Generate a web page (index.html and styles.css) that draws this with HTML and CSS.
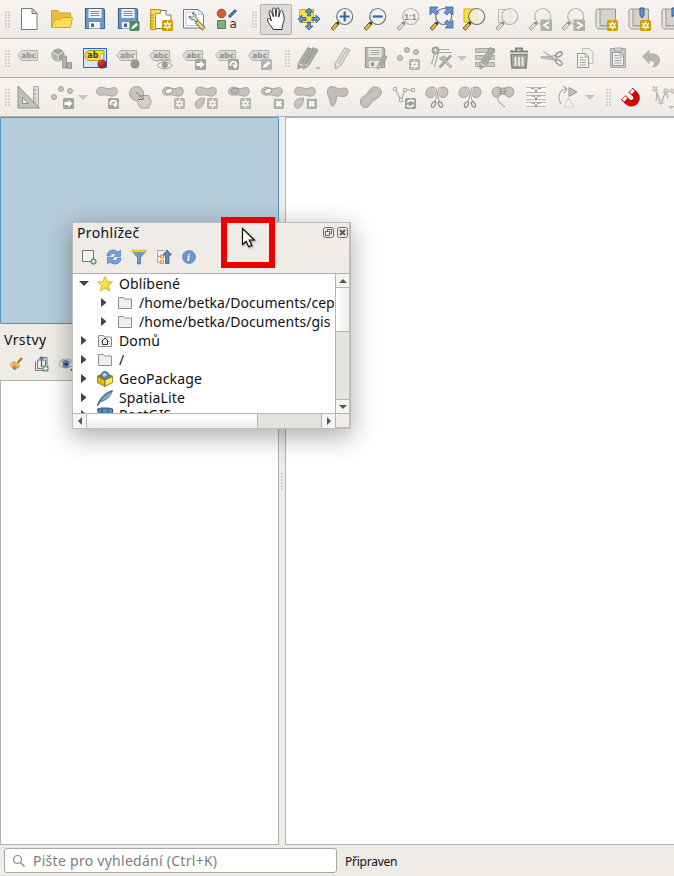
FILE: index.html
```html
<!DOCTYPE html>
<html lang="cs">
<head>
<meta charset="utf-8">
<title>QGIS</title>
<link rel="stylesheet" href="styles.css">
</head>
<body>
<svg class="defs" width="0" height="0">
  <defs>
    <linearGradient id="gy" x1="0" y1="0" x2="1" y2="1"><stop offset="0" stop-color="#fdf08a"/><stop offset="1" stop-color="#f5cf12"/></linearGradient>
    <radialGradient id="gr" cx=".35" cy=".3" r=".8"><stop offset="0" stop-color="#d84040"/><stop offset="1" stop-color="#8c1010"/></radialGradient>
    <symbol id="b-star" viewBox="0 0 11 11"><rect width="11" height="11" rx="1.5" fill="currentColor"/><path d="M5.5 1.3v8.4M1.9 3.4l7.2 4.2M9.1 3.4L1.9 7.6" stroke="#fff" stroke-width="1.3"/><circle cx="5.5" cy="5.5" r="2.5" fill="#fff"/><circle cx="5.5" cy="5.5" r="1.2" fill="currentColor"/></symbol>
    <symbol id="b-arrow" viewBox="0 0 11 11"><rect width="11" height="11" rx="1.5" fill="currentColor"/><path d="M1.500 3.900h3.800V1.800l4.200 3.700-4.200 3.700V7.100H1.500z" fill="#fff"/></symbol>
    <symbol id="b-rot" viewBox="0 0 11 11"><rect width="11" height="11" rx="1.5" fill="currentColor"/><path d="M2.700 7A3 3 0 1 1 7 8.300" fill="none" stroke="#fff" stroke-width="1.700"/><path d="M4 5.500h3.500v4.500z" fill="#fff"/></symbol>
    <symbol id="b-x" viewBox="0 0 11 11"><rect width="11" height="11" rx="1.5" fill="currentColor"/><path d="M3 3l5 5M8 3L3 8" stroke="#fff" stroke-width="2.500"/></symbol>
    <symbol id="b-pen" viewBox="0 0 11 11"><rect width="11" height="11" rx="1.5" fill="currentColor"/><path d="M2 9l1-3 4.500-4 2 2L5 8z" fill="#fff"/></symbol>
    <symbol id="tag" viewBox="0 0 24 24"><path d="M.6 9.500l4-5h16v10h-16z" fill="#dcdad7" stroke="#b4b2af"/><text x="4.300" y="12.300" class="abc">abc</text></symbol>
    <symbol id="lens" viewBox="0 0 24 24"><path d="M2 22.500L8 16" stroke="var(--edge)" stroke-width="3.600"/><path d="M2.400 22.100L7.500 16.600" stroke="var(--grip)" stroke-width="2.400"/><path d="M7 17l3-3" stroke="var(--edge)" stroke-width="2.200"/><circle cx="14.700" cy="9.500" r="8" fill="var(--glass)" stroke="var(--ring)" stroke-width="1.200"/></symbol>
    <symbol id="floppy" viewBox="0 0 24 24"><path d="M2.500 1.500h17.500l1.500 1.500v18.500H2.500z" fill="var(--a)" stroke="var(--b)" stroke-width="1.200"/><path d="M5.500 2h13v9h-13z" fill="var(--l)"/><path d="M7.500 4.500h9M7.500 6.500h9M7.500 8.500h9" stroke="var(--n)" stroke-width=".9"/><path d="M6 15h11v6.500H6z" fill="var(--l)"/><path d="M8 16.500h3v3.500H8z" fill="var(--b)"/></symbol>
    <symbol id="blob" viewBox="0 0 24 24"><path d="M1.500 6.500C1.500 3 5 1.500 8.500 2.500s4 2 7.500.7 6-.7 6.200 2.500c.2 4-2.700 6-6.200 5.300S10 9.500 7.500 10 1.500 10 1.500 6.500z" fill="#c6c4c1" stroke="#a5a3a0"/></symbol>
    <symbol id="drop" viewBox="0 0 24 24"><path d="M1.500 20c-1-4 3-7 9-7 0 6-3 11-7 10-1.300-.3-1.700-1.500-2-3z" fill="#c6c4c1" stroke="#a5a3a0"/></symbol>
    <symbol id="pencil" viewBox="0 0 24 24"><path d="M5 17.500L15 1.500l5 2.500L10.500 20l-5.500 3z" fill="var(--p)" stroke="var(--po)"/><path d="M17.500 3L8 18.500" fill="none" stroke="var(--po)" stroke-width=".8"/><path d="M5.500 17.500l5 2.500" stroke="#efedeb" stroke-width=".9"/></symbol>
    <symbol id="scis" viewBox="0 0 24 24"><path d="M1 8c0-3 2-6 6-6 3 0 4 2 4 5s-3 6-6 5.500S1 10.500 1 8zM13 7c0-3 1-5 5-5 3 0 5 2 5 5s-2 5.500-5 5.500-5-2.500-5-5.500z" fill="#c6c4c1" stroke="#a5a3a0"/><path d="M10.500 2.500L14.500 17M14 2.500L10 17" stroke="#f0eeeb" stroke-width="2.200"/><path d="M10.500 2.500L14.500 17M14 2.500L10 17" stroke="#a6a4a1" stroke-width="1"/><ellipse cx="8.500" cy="19.500" rx="1.700" ry="3" transform="rotate(30 8.500 19.500)" class="loop"/><ellipse cx="15.500" cy="19.500" rx="1.700" ry="3" transform="rotate(-30 15.500 19.500)" class="loop"/></symbol>
    <symbol id="scroll" viewBox="0 0 24 24"><path d="M5 2h16.500v17H5z" fill="#d4d2cf" stroke="#969492"/><path d="M2 3.500c0-2 4-2 4 0v15c0 4-4 4-4 0z" fill="#e7e5e3" stroke="#969492"/><path d="M4 22h14v-3H6" fill="#e0dedc" stroke="#969492"/></symbol>
    <symbol id="folder" viewBox="0 0 16 16"><path d="M1.500 13.500v-11h5l1 1.500h7v9.500z" fill="#efefef" stroke="#8d8d8d"/></symbol>
  </defs>
</svg>
<div class="app">
  <header>
    <div class="bar">
      <i class="grip first"></i>
      <svg class="ic"><path d="M4.500 1.500H15l5 5v16H4.500z" fill="#fff" stroke="#777"/><path d="M15 1.500v5h5z" fill="#ddd" stroke="#777"/></svg>
      <svg class="ic"><path d="M1.500 20.500V3.500h6l2 2.500h11v4" fill="#e9bc3a" stroke="#cb9f2d"/><path d="M1.500 20.500l3.500-8h5l2-2h10.500l-2 10z" fill="#ffdc57" stroke="#d3a62e"/></svg>
      <svg class="ic blue"><use href="#floppy"/></svg>
      <svg class="ic blue"><use href="#floppy"/><g color="#4d8a57"><use href="#b-pen" x="13" y="14" width="11" height="10"/></g></svg>
      <svg class="ic"><path d="M5 3.500h12l5 5v13H5z" fill="#fff" stroke="#777"/><path d="M17 3v5h5" fill="#fff" stroke="#777"/><path d="M1.500 2.500h10v4h-5v16h-5z" fill="#f7dc50" stroke="#bd9412"/><path d="M2 8h2.500M2 11h2.500M2 14h2.500M2 17h2.500M2 20h2.500" stroke="#9d7d18"/><g color="#caa108"><use href="#b-star" x="13" y="13" width="11" height="11"/></g></svg>
      <svg class="ic"><path d="M1.500 2.500h15l5 5v13.500h-20z" fill="#fff" stroke="#777"/><path d="M16.500 2.500v5h5M4 5h9M4 5v13.500h14" fill="none" stroke="#b5c8e0"/><path d="M7 9c0 3 2.500 4.500 5 3.500l2 2.500 2-2-2-2.500C15 8 13 5.500 10 6l2 2.500-2 2z" fill="#ddd" stroke="#666"/><path d="M14.500 14.500l7.500 7.500" stroke="#776728" stroke-width="4.500"/><path d="M15 15l6.500 6.500" stroke="#efd778" stroke-width="2.600"/></svg>
      <svg class="ic"><circle cx="6.500" cy="6.500" r="4.200" fill="#cf6133" stroke="#aa451e"/><path d="M2.500 13.500h8v8h-8z" fill="#83ad84" stroke="#4c8753"/><path d="M14 10l7-7" stroke="#31598d" stroke-width="3"/><path d="M15 9l6-6" stroke="#6c98c9"/><text x="14.500" y="21" class="letter">a</text></svg>
      <i class="grip"></i>
      <span class="pressed"><svg class="ic"><path d="M9 22.500c-1-3-5.500-7-5.500-9.500s2.500-2 4 1L5 5.500C4.500 3.500 7 3 7.500 5L9.500 10 8.500 2.500c0-2 2.500-2 2.800 0L12 9.500l.5-7.300c.2-1.900 2.600-1.600 2.600.2l-.3 7.600 1.500-5.500c.6-1.800 2.700-1.200 2.400.6 2 5.400 1.800 8.400.3 11.400l-1 6z" fill="#fff" stroke="#333"/></svg></span>
      <svg class="ic"><path d="M2.500 2.500h14v13h-14z" fill="#f7df43" stroke="#cfaa1c"/><path d="M12 1l4 4h-2.500v4h-3V5H8zM12 23l-4-4h2.500v-4h3v4H16zM1 12l4-4v2.500h4v3H5V16zM23 12l-4 4v-2.500h-4v-3h4V8z" fill="#6494c8" stroke="#315d91" stroke-width=".8"/></svg>
      <svg class="ic yg"><use href="#lens"/><path d="M14.700 4.500v10M9.700 9.500h10" stroke="#386ba6" stroke-width="2.200"/></svg>
      <svg class="ic yg"><use href="#lens"/><path d="M9.700 9.500h10" stroke="#386ba6" stroke-width="2.200"/></svg>
      <svg class="ic gg"><use href="#lens"/><text x="8.300" y="12.500" class="one">1:1</text></svg>
      <svg class="ic yg"><use href="#lens"/><path d="M1 0h8L7 2.500l3 3L7 8 4 5 1 8zM24 0v8l-3-3-3 3-3-2.500 3-3L16 0zM24 21h-8l2.500-2.500-3-3 2.500-2.500 3 3 3-3z" fill="#6595c9" stroke="#315d91" stroke-width=".7"/></svg>
      <svg class="ic yg"><path d="M2 2h13v13H2z" fill="#f8e140" stroke="#d0b000"/><use href="#lens"/></svg>
      <svg class="ic gg"><path d="M3.500 2.500h12v13h-12z" fill="#eee" stroke="#bbb"/><use href="#lens"/></svg>
      <svg class="ic gg"><use href="#lens"/><rect x="12.500" y="12.500" width="11.500" height="11.500" fill="#b1afac"/><path d="M21 15l-5 3.200 5 3.200" fill="none" stroke="#fff" stroke-width="1.800"/></svg>
      <svg class="ic gg"><use href="#lens"/><rect x="12.500" y="12.500" width="11.500" height="11.500" fill="#b1afac"/><path d="M16 15l5 3.200-5 3.200" fill="none" stroke="#fff" stroke-width="1.800"/></svg>
      <svg class="ic"><use href="#scroll"/><g color="#caa108"><use href="#b-star" x="13" y="13" width="11" height="11"/></g></svg>
      <svg class="ic"><use href="#scroll"/><path d="M13 1h4v7l-2 3-2-3z" fill="#6595c9" stroke="#315d91"/><g color="#caa108"><use href="#b-star" x="13" y="13" width="11" height="11"/></g></svg>
      <svg class="ic"><use href="#scroll"/><path d="M12 1h4v9l-2-2-2 2z" fill="#6595c9" stroke="#315d91"/></svg>
    </div>
    <div class="bar g">
      <i class="grip first"></i>
      <svg class="ic"><use href="#tag"/></svg>
      <svg class="ic"><path d="M12.500 10h4v12h-4zM17.500 16.500h4v6h-4z" fill="#b3b1ae" stroke="#9a9895"/><circle cx="8" cy="9" r="6.500" fill="#a5a3a0"/><path d="M8 9V15.500A6.500 6.500 0 0 1 2.400 5.600z" fill="#b8b6b3"/><path d="M8 9L2.500 5.700M8 9l5.500-3.300M8 9v6.500" stroke="#e4e2df"/></svg>
      <svg class="ic"><path d="M.5 2.500h23v19H.5z" fill="#d8e5f3" stroke="#156fd6"/><path d="M1 9.500l4-5h16v10H5z" fill="#f2df43" stroke="#b89c16"/><text x="4.300" y="12.300" class="ab">ab</text><path d="M17 15l1-7.500 2.500 1-1 7z" fill="#fff" stroke="#998a60" stroke-width=".6"/><circle cx="19" cy="18" r="4.600" fill="url(#gr)"/></svg>
      <svg class="ic"><use href="#tag"/><path d="M17 15l1-7.500 2.500 1-1 7z" fill="#eee" stroke="#aaa" stroke-width=".6"/><circle cx="19" cy="18" r="4.600" fill="#989693"/></svg>
      <svg class="ic"><use href="#tag"/><path d="M8 19.500c4-5 11-5 15.500 0-4.500 4.500-11.500 4.500-15.500 0z" fill="#eee" stroke="#999"/><circle cx="15.800" cy="19" r="3" fill="#999"/><path d="M8 16c4-4 11-4 15 0" fill="none" stroke="#aaa"/></svg>
      <svg class="ic"><use href="#tag"/><use href="#b-arrow" x="13" y="13" width="11" height="11"/></svg>
      <svg class="ic"><use href="#tag"/><use href="#b-rot" x="13" y="13" width="11" height="11"/></svg>
      <svg class="ic"><use href="#tag"/><g color="#b5b3b0"><use href="#b-pen" x="13" y="13" width="11" height="11"/></g></svg>
      <i class="grip"></i>
      <svg class="ic dp"><use href="#pencil" x="1" width="24" height="24"/><use href="#pencil" x="-4" width="24" height="24"/><path d="M18 21h6l-3 3z" fill="#bbb"/></svg>
      <svg class="ic"><use href="#pencil" width="24" height="24"/></svg>
      <svg class="ic"><use href="#floppy"/><g class="dp"><use href="#pencil" x="11" y="8" width="16" height="16"/></g></svg>
      <svg class="ic"><g class="node"><circle cx="4" cy="12" r="2.500"/><circle cx="11" cy="4" r="2.500"/><circle cx="20" cy="6" r="2.500"/></g><g color="#b8b6b3"><use href="#b-star" x="13" y="13" width="11" height="11"/></g></svg>
      <svg class="ic"><path d="M2.500 18.500L6 6M5.500 20.500L9 7.500M8 3.500h12M9 6.500h14" class="ol"/><circle cx="6.500" cy="4.500" r="3.500" fill="#b5b3b0" stroke="#8f8d8a"/><path d="M4.500 4.500h4M6.500 2.500v4" stroke="#e0dedb"/><path d="M22 9.500L10.500 21.500" stroke="#a9a7a4" stroke-width="3"/><path d="M14 13.500l8.500 8" stroke="#aaa8a5" stroke-width="2.600"/><path d="M14 13.500l8 7.500" stroke="#dedcd9"/><path d="M10 12.500l5-3 2.500 3-3.500 2.500z" fill="#bbb9b6" stroke="#a5a3a0" stroke-width=".7"/></svg>
      <i class="arr"></i>
      <svg class="ic"><path d="M1.500 2.500h19v4h-19zM1.500 9.500h19v4h-19zM1.500 16.500h19v4h-19z" fill="#c9c7c4" stroke="#acaaa7"/><g class="dp"><use href="#pencil" x="1" width="24" height="24"/></g></svg>
      <svg class="ic"><path d="M4 8.500h16l-1 13.500H5z" fill="#aaa8a5" stroke="#858380" stroke-width="1.500"/><path d="M3 5.500h18M9 5V2.500h6V5" fill="none" stroke="#858380" stroke-width="2"/><path d="M8.500 11v9M12 11v9M15.500 11v9" stroke="#eee" stroke-width="1.800"/></svg>
      <svg class="ic"><path d="M1 10.500l16 2.500-1 1.500L1 12zM3 5l13.500 9-2 1z" fill="#d6d4d1" stroke="#aba9a6" stroke-width=".8"/><path d="M1.500 11.500L17 9.500" stroke="#b5b3b0" stroke-width="1.500"/><ellipse cx="18.800" cy="8.500" rx="3.700" ry="2" transform="rotate(-30 18.800 8.500)" fill="none" stroke="#999" stroke-width="1.500"/><ellipse cx="19" cy="16.500" rx="3.700" ry="2" transform="rotate(40 19 16.500)" fill="none" stroke="#999" stroke-width="1.500"/></svg>
      <svg class="ic"><path d="M9.500 2.500h7l3.500 3.500v11.500H9.500z" fill="#f0eeec" stroke="#bfbdba"/><path d="M4.500 7.500h8l3 3v11h-11z" fill="#f3f1ef" stroke="#999"/><path d="M7 11.500h3M7 14h6M7 16.500h6M7 19h6M12 7.500v3.500h3.500" fill="none" stroke="#a5a3a0"/></svg>
      <svg class="ic"><path d="M4.500 2.500h15v19h-15z" fill="#c9c7c4" stroke="#aaa8a5"/><path d="M6.500 6.500h8l3 3v10h-11z" fill="#f3f1ef" stroke="#999"/><path d="M8.500 2h7v3h-7z" fill="#ddd" stroke="#a5a3a0"/><path d="M8.500 9.500h4M8.500 12h7M8.500 14.500h7M8.500 17h7M14 6.500v3.500h3.500" fill="none" stroke="#a5a3a0"/></svg>
      <svg class="ic"><path d="M3.500 10.500L10 4.500v3.500c8-1 11 3 10.500 7-.5 4-3.500 5.500-7 6 3-3 3.500-7-3.500-6.500v3z" fill="#b8b6b3" stroke="#acaaa7" stroke-width=".8"/></svg>
    </div>
    <div class="bar g">
      <i class="grip first"></i>
      <svg class="ic"><path d="M16.500 1.500h5v21h-5z" fill="#dddbd8" stroke="#aaa"/><path d="M17 5h2M17 9h2M17 13h2M17 17h2" stroke="#999"/><path d="M1 1l21.500 22H1z" fill="#c2c0bd" stroke="#918f8c"/><path d="M5.500 12l6 6.500h-6z" fill="#f1efed" stroke="#918f8c"/></svg>
      <svg class="ic"><g class="node"><circle cx="4" cy="12" r="2.500"/><circle cx="11" cy="4" r="2.500"/><circle cx="20" cy="6" r="2.500"/></g><use href="#b-arrow" x="13" y="13" width="11" height="11"/></svg>
      <i class="arr"></i>
      <svg class="ic"><use href="#blob"/><use href="#b-rot" x="13" y="13" width="11" height="11"/></svg>
      <svg class="ic"><circle cx="8.500" cy="8.500" r="7" fill="#c6c4c1" stroke="#a5a3a0"/><path d="M12.500 10.500h8l3 6-3 6.500h-8l-3.500-6.500z" fill="#d0cecb" stroke="#a5a3a0"/><path d="M8 7l7 7M15 10v4.500h-4.500" fill="none" stroke="#777"/></svg>
      <svg class="ic"><use href="#blob"/><ellipse cx="8" cy="6" rx="4" ry="2.500" transform="rotate(-20 8 6)" fill="#f4f2f0" stroke="#999"/><g color="#b8b6b3"><use href="#b-star" x="13" y="13" width="11" height="11"/></g></svg>
      <svg class="ic"><use href="#blob"/><use href="#drop"/><g color="#b8b6b3"><use href="#b-star" x="13" y="13" width="11" height="11"/></g></svg>
      <svg class="ic"><use href="#blob"/><ellipse cx="8" cy="6" rx="4" ry="2.700" fill="#b8b6b3" stroke="#999"/><g color="#b8b6b3"><use href="#b-star" x="13" y="13" width="11" height="11"/></g></svg>
      <svg class="ic"><use href="#blob"/><ellipse cx="8" cy="6" rx="4" ry="2.500" transform="rotate(-20 8 6)" fill="#f4f2f0" stroke="#999"/><g color="#b1afac"><use href="#b-x" x="13.500" y="13.500" width="10.500" height="10.500"/></g></svg>
      <svg class="ic"><use href="#blob"/><use href="#drop"/><g color="#b1afac"><use href="#b-x" x="13.500" y="13.500" width="10.500" height="10.500"/></g></svg>
      <svg class="ic"><path d="M1.500 7C1 3 4 1 8 2s4 2.500 7.500 1.500S22 3 22 6.500s-2 5.500-5.500 5-5.500-1-6 1.500S9 21 6.500 21 4.500 16 3 12.500 1.500 9 1.500 7z" fill="#bfbdba" stroke="#a5a3a0"/></svg>
      <svg class="ic"><path d="M1.500 16c0-4 3.500-4.500 5.500-6S11 2 16 2s8 4 5.500 8-6 4-8 6.500-3.500 6-7 6-5-2.500-5-6.500z" fill="#c6c4c1" stroke="#a5a3a0"/><path d="M3.500 16.500c0-3 3-3.500 5-5.500s3-6.500 7-6.500 6 2.500 4 5.500-5 3-7 5.500-3 5-6 5-3-2-3-4z" fill="none" stroke="#b8b6b3"/></svg>
      <svg class="ic"><path d="M3 4l6 11 4-10h8" class="ol"/><path d="M1.500 2.500h3v3h-3zM7.500 13.500h3v3h-3zM11.500 3.500h3v3h-3zM19.500 3.500h3v3h-3z" fill="#eee" stroke="#aaa"/><rect x="13" y="13" width="11" height="11" rx="1.500" fill="#a3a19e"/><path d="M15.500 17.500a3.200 3 0 0 1 6-.5v-2M21.500 19.500a3.200 3 0 0 1-6 .5v2" fill="none" stroke="#fff" stroke-width="1.500"/></svg>
      <svg class="ic"><use href="#scis"/></svg>
      <svg class="ic"><use href="#scis"/></svg>
      <svg class="ic"><path d="M1 7c0-3 3-5 6-5 2 0 3 2 4 5-1 4-4 5-6 5S1 10 1 7zM13 6c0-3 2-4 5-4s5 2 5 5-3 5-5 5-5-3-5-6z" fill="#c6c4c1" stroke="#a5a3a0"/><path d="M8 4h8M8 6.500h8M8 9h8M10 2v8M13 2v8" stroke="#999"/><path d="M7 10c-2 6 2 8 7 12" class="ol"/></svg>
      <svg class="ic"><path d="M2 2.500h20v5H2zM2 10h20v5H2zM2 17h20v4.500H2z" fill="#faf9f7"/><path d="M2 2.500h20M2 7.500h20M2 10.500h20M2 14.500h20M2 17.500h20M2 21.500h20" stroke="#b9b7b4"/><path d="M7 3.500h3l1.500 2v2M17 3.500h-3l-1.500 2v2M7 11h3l1.500 2v2M17 11h-3l-1.500 2v2M7 18h3l1.500 2v2M17 18h-3l-1.500 2v2" fill="none" stroke="#96948f"/></svg>
      <svg class="ic"><path d="M4 19C0 12 2 5 9 4M6 1l4 3-3 4" class="ol"/><path d="M12 2.500v9l8-4.500z" fill="#c0bebb" stroke="#999"/><path d="M11.500 13l-5 9h10z" fill="#f2f0ee" stroke="#ccc"/></svg>
      <i class="arr"></i>
      <i class="grip"></i>
      <svg class="ic"><path d="M13 5.500l4 3.700c5 5-2.500 12.300-7.500 7.500l-4-4" fill="none" stroke="#a80404" stroke-width="6.400"/><path d="M13 5.500l4 3.700c5 5-2.500 12.300-7.500 7.500l-4-4" fill="none" stroke="#d90808" stroke-width="4.800"/><path d="M13 5.500l2.300 2.100M5.500 12.700l2.300 2.300" stroke="#fff" stroke-width="4.600"/><path d="M10.700 7.600l4.300-4.600M3 15.100l4.600-4.600" stroke="#c00" stroke-dasharray="1.500 1"/></svg>
      <svg class="ic"><path d="M4 4l6 14 5-12h8M6 9l-1 7M15 7l2 6" class="ol"/><path d="M2 2h4v4H2zM8 15h4v4H8zM13 4h4v4h-4zM20 4h4v4h-4z" fill="#d4d2cf" stroke="#b8b6b3" stroke-dasharray="2 1"/><path d="M17 21h7l-3.500 3z" fill="#bbb"/></svg>
    </div>
  </header>
  <main>
    <section class="left">
      <div class="dock"></div>
      <div class="layers">
        <h2>Vrstvy</h2>
        <div class="ltools">
          <svg width="17" height="17"><path d="M9.500 7L14 2" stroke="#b77720" stroke-width="2.500"/><path d="M6 5l6 5-2 2-6-5z" fill="#e5c24d" stroke="#a77a25" stroke-width=".5"/><path d="M4 7l6 5-3 2-5-4z" fill="#ee7a68"/><path d="M1 8l3-2 2 3-3 2z" fill="#f6cf38"/><path d="M4 12l2-1 2 3-2 0z" fill="#5792ce"/></svg>
          <svg width="17" height="17"><path d="M2.500 5.500v9h7M4.500 4v8.500h8V4zM7 3V1.500h7V9" fill="none" stroke="#777"/><path d="M8.500 1v10M6.500 3l2-2 2 2" fill="none" stroke="#3f75ac" stroke-width="1.300"/><rect x="9.500" y="9.500" width="6" height="6" rx="1" fill="#579b60"/><path d="M12.500 10.500v4M10.500 12.500h4" stroke="#fff" stroke-width="1.300"/></svg>
          <svg width="17" height="17"><path d="M1 8.500C4 3 11 3 15 8.500 11 13 4 13 1 8.500z" fill="#f4f4f4" stroke="#999"/><circle cx="8" cy="8" r="3.700" fill="#5b89b8"/><circle cx="8" cy="8" r="1.600" fill="#203b58"/><path d="M1 6c3-4 11-4 14 0" fill="none" stroke="#aaa"/><path d="M12 13h4l-2 2z" fill="#333"/></svg>
        </div>
        <div class="list"></div>
      </div>
    </section>
    <div class="split"><i></i></div>
    <section class="map"></section>
  </main>
  <footer>
    <div class="search"><svg width="14" height="14"><circle cx="5.500" cy="5.500" r="4" fill="none" stroke="#8a8a8a" stroke-width="1.200"/><path d="M8.500 8.500l4 4" stroke="#8a8a8a" stroke-width="1.400"/></svg><span>Pište pro vyhledání (Ctrl+K)</span></div>
    <span class="ready">Připraven</span>
  </footer>
</div>

<div class="browser">
  <div class="head"><h2>Prohlížeč</h2>
    <svg width="26" height="12"><g fill="none" stroke="#6b6966"><rect x=".5" y=".5" width="10" height="10" rx="2"/><rect x="4.500" y="2.500" width="4" height="4"/><rect x="2.500" y="4.500" width="4" height="4" fill="#efebe7"/><rect x="14.500" y=".5" width="10" height="10" rx="2"/></g><path d="M17 3l5 5M22 3l-5 5" stroke="#5c5a58" stroke-width="2"/></svg>
  </div>
  <div class="btools">
    <svg width="16" height="16"><path d="M1.500 1.500h11v11h-11z" fill="#f3f1ef" stroke="#777"/><circle cx="12.500" cy="12.500" r="2.700" fill="#8fbc95" stroke="#4a8b54"/><path d="M12.500 11v3M11 12.500h3" stroke="#fff"/></svg>
    <svg width="16" height="16"><path d="M1 7C1 1 8-1 12 3l2.500-2v6.500H8L10 5.500C7 3.500 5 4.500 4.500 7z" fill="#6fa0d5" stroke="#4478ae" stroke-width=".6"/><path d="M15 9c0 6-7 8-11 4l-2.500 2V8.500H8L6 10.500C9 12.500 11 11.500 11.500 9z" fill="#6fa0d5" stroke="#4478ae" stroke-width=".6"/></svg>
    <svg width="16" height="16"><path d="M1 2h14L9.500 8.500V15H6.500V8.500z" fill="#6c98c9" stroke="#4472a3" stroke-width=".7"/><path d="M1 1h14v2H1z" fill="#f2dc49" stroke="#c1a624" stroke-width=".6"/></svg>
    <svg width="16" height="16"><path d="M8 1.500H1.500v12H5M1.500 7.500H5" fill="none" stroke="#aaa"/><path d="M4.500 6h3v3h-3zM4.500 11.500h3v3h-3z" fill="#ffd9ad" stroke="#ef9030"/><path d="M9.500 14.500V6H7l4-5 4.500 5H13v8.500z" fill="#5c8bc0" stroke="#315d91" stroke-width=".8"/></svg>
    <svg width="16" height="16"><circle cx="8" cy="8" r="6.500" fill="#6797cc" stroke="#7392b5"/><text x="5.800" y="12.200" class="info">i</text></svg>
  </div>
  <div class="pane">
    <div class="tree">
      <div class="row"><i class="tw open"></i><svg width="16" height="16"><path d="M8 .5l2.100 5.200 5.400.3-4.200 3.500 1.400 5.500L8 12 3.300 15l1.400-5.500L.5 6l5.400-.3z" fill="url(#gy)" stroke="#d5ad20" stroke-width=".9"/></svg><span>Oblíbené</span></div>
      <div class="row sub"><i class="tw"></i><svg width="16" height="16"><use href="#folder"/></svg><span>/home/betka/Documents/cepice</span></div>
      <div class="row sub"><i class="tw"></i><svg width="16" height="16"><use href="#folder"/></svg><span>/home/betka/Documents/gis</span></div>
      <div class="row"><i class="tw"></i><svg width="16" height="16"><use href="#folder"/><path d="M4.500 8.500L8 5l3.500 3.500M5.500 8v3.500h5V8" fill="none" stroke="#333"/></svg><span>Domů</span></div>
      <div class="row"><i class="tw"></i><svg width="16" height="16"><use href="#folder"/></svg><span>/</span></div>
      <div class="row"><i class="tw"></i><svg width="16" height="16"><path d="M.5 5L8 2l7.500 3L8 9z" fill="#c69f17" stroke="#765f0c" stroke-width=".7"/><circle cx="8" cy="4.700" r="4.200" fill="#5c88b4" stroke="#31567e" stroke-width=".7"/><path d="M5 3l3-1 2 2-3 2z" fill="#c6d8e6"/><path d="M.5 5.500L8 9v6.500l-7.500-4z" fill="#e2b813" stroke="#765f0c" stroke-width=".7"/><path d="M15.500 5.500L8 9v6.500l7.500-4z" fill="#fbe957" stroke="#765f0c" stroke-width=".7"/></svg><span>GeoPackage</span></div>
      <div class="row"><i class="tw"></i><svg width="16" height="16"><path d="M.5 15.500C2 10 6 3 15.500.5 13.500 6.500 9 10.500 3.500 11.500z" fill="#8bb2d5" stroke="#315472" stroke-width=".8"/><path d="M.5 15.500C4 9 9 4 15 1" fill="none" stroke="#315472" stroke-width=".8"/></svg><span>SpatiaLite</span></div>
      <div class="row last"><i class="tw"></i><svg width="16" height="16"><path d="M.5 2l4-1h7l4 1v6l-4 2v5H7v-5L2 9z" fill="#5e8cba" stroke="#31567e"/><path d="M5 2v6M11 2v6" stroke="#31567e"/></svg><span>PostGIS</span></div>
    </div>
    <div class="vs"><b class="btn up"></b><b class="thumb"></b><b class="track"></b><b class="btn down"></b></div>
    <div class="hs"><b class="btn lt"></b><b class="thumb"></b><b class="track"></b><b class="btn rt"></b></div>
    <div class="corner"></div>
  </div>
</div>
<div class="mark"></div>
<svg class="cursor" width="16" height="24"><path d="M1.500 1.500v16l3.700-3.300 2.500 5.500 3-1.300-2.500-5.400h5z" fill="#fff" stroke="#111" stroke-width="1.200"/></svg>
</body>
</html>
```
FILE: styles.css
```css
*, ::before { box-sizing: border-box; }
body { margin: 0; width: 674px; height: 876px; overflow: hidden; background: #efebe7; color: #111; font: 14px/19px "Noto Sans", "Open Sans", sans-serif; }
.defs { position: absolute; }
h2 { margin: 0; font-size: 14px; line-height: 19px; font-weight: 400; letter-spacing: .4px; }
.app { height: 876px; display: flex; flex-direction: column; }
header { flex: none; height: 117px; }
.bar { height: 39px; display: flex; align-items: flex-start; overflow: hidden; border-bottom: 1px solid #b3b0ad; background: linear-gradient(#f7f4f1, #eeebe7); --a: #bbb9b6; --b: #999794; --l: #e9e7e4; --n: #a5a3a0; --p: #dcdad7; --po: #aeaca9; --edge: #333; --grip: #f5bd27; --glass: #edf1f2cc; --ring: #707475; }
.bar.g { color: #a6a4a1; }
.ic { flex: none; display: block; width: 24px; height: 24px; margin: 7px 5px 0 4px; overflow: visible; fill: none; }
.g .ic { margin-top: 6.500px; }
.blue { --a: #6d98c9; --b: #44658c; --l: #f1f3f5; --n: #77808a; }
.gg { --edge: #858380; --grip: #e4e2df; --glass: #f0eeecb0; --ring: #b5b3b0; }
.dp { --p: #b1afac; --po: #979592; }
.grip { flex: none; width: 16px; height: 39px; padding: 11px 0 0 8px; }
.grip::before { content: ""; display: block; width: 6px; height: 17px; background: radial-gradient(circle at 1px 1px, #cbc8c4 .6px, transparent 1px) 0 0 / 3px 3px; }
.grip.first { width: 13px; padding-left: 5px; }
.arr { flex: none; width: 12px; padding-top: 17px; }
.arr::before { content: ""; display: block; width: 10px; height: 5px; margin-left: -1px; border: 5px solid transparent; border-top-color: #c6c4c1; border-bottom: 0; }
.pressed { flex: none; width: 32px; height: 31px; margin: 4px 1px 0 0; background: #dedad7; border: 1px solid #b1aeab; border-radius: 2px; }
.pressed .ic { margin: 2px 3px; }
.abc { font: bold 7.5px "DejaVu Sans", sans-serif; fill: #92908d; }
.ab { font: bold 8px "DejaVu Sans", sans-serif; fill: #3d3a20; }
.letter { font: 12px "DejaVu Sans", sans-serif; fill: #333; }
.one { font: bold 8.5px "Liberation Sans", sans-serif; fill: #8f8d8a; }
.info { font: italic bold 11px "Liberation Serif", serif; fill: #fff; }
.ol { fill: none; stroke: #a8a6a3; stroke-width: 1.1; }
.loop { fill: none; stroke: #96948f; stroke-width: 1.3; }
.node { fill: #c6c4c1; stroke: #a3a19e; }
main { flex: 1; display: flex; min-height: 0; }
.left { width: 279px; display: flex; flex-direction: column; }
.dock { height: 207px; background: #b5ccda; border: 1px solid #5793bd; border-radius: 1px; }
.layers { flex: 1; display: flex; flex-direction: column; }
.layers h2 { padding: 6px 4px 0; height: 31px; }
.ltools { height: 25px; display: flex; gap: 8px; padding: 1px 8px; }
.list { flex: 1; background: #fff; border: 1px solid #b3b0ad; }
.split { width: 6px; display: flex; align-items: center; padding-left: 2px; }
.split i { width: 3px; height: 17px; background: radial-gradient(circle at 1px 1px, #cbc8c4 .6px, transparent 1px) 0 0 / 3px 3px; }
.map { flex: 1; background: #fff; border: solid #b3b0ad; border-width: 1px 0 1px 1px; }
footer { flex: none; height: 31px; display: flex; align-items: flex-start; padding: 3px 4px; }
.search { width: 333px; height: 25px; display: flex; align-items: center; gap: 7px; padding-left: 7px; border: 1px solid #aaa7a4; border-radius: 3px; background: #fff; color: #7e7e7e; }
.search span { white-space: nowrap; letter-spacing: .27px; }
.ready { margin: 4px 0 0 8px; font-size: 12px; line-height: 20px; letter-spacing: -.25px; }
.browser { position: absolute; left: 72px; top: 222px; width: 279px; height: 207px; background: #efebe7; border: solid #c0bcb8; border-width: 1px 2px 2px 1px; box-shadow: 0 7px 24px 1px #00000052; }
.head { height: 19px; display: flex; justify-content: space-between; padding: 0 0 0 4px; }
.head h2 { letter-spacing: .35px; }
.head svg { margin-top: 4px; }
.btools { height: 31px; display: flex; gap: 9px; padding: 7px 8px; }
.pane { height: 154px; display: grid; grid-template: 139px 15px / 262px 14px; border-top: 1px solid #b3b0ad; background: #efebe7; }
.tree { overflow: hidden; background: #fff; }
.row { height: 19px; display: flex; align-items: center; white-space: nowrap; padding-left: 8px; letter-spacing: .15px; }
.row svg { flex: none; margin: 0 6px 0 9.5px; }
.row.sub { padding-left: 28px; letter-spacing: .05px; }
.row.last { margin-top: -2px; }
.tw { flex: none; width: 6px; height: 9px; margin-right: .5px; border: solid transparent; border-width: 4.5px 0 4.5px 5px; border-left-color: #444; }
.tw.open { width: 10px; height: 5px; border-width: 5px 5px 0; border-color: #444 transparent; margin: 0 -2px; }
.tw.open + svg { margin-left: 10px; }
.vs { border-left: 1px solid #b7b4b1; display: flex; flex-direction: column; }
.hs { border-top: 1px solid #b7b4b1; display: flex; }
.corner { border: solid #b7b4b1; border-width: 1px 0 0 1px; }
.btn { flex: none; display: grid; place-items: center; background: #f7f5f3; }
.btn::before { content: ""; border: 4px solid transparent; }
.vs .btn { height: 14px; }
.hs .btn { width: 14px; }
.up { border-bottom: 1px solid #b7b4b1; }
.down { border-top: 1px solid #b7b4b1; }
.lt { border-right: 1px solid #b7b4b1; }
.rt { border-left: 1px solid #b7b4b1; }
.up::before { border-bottom-color: #555; border-top: 0; }
.down::before { border-top-color: #555; border-bottom: 0; }
.lt::before { border-right-color: #555; border-left: 0; }
.rt::before { border-left-color: #555; border-right: 0; }
.track { flex: 1; background: #e4e3df; }
.vs .thumb { height: 44px; background: linear-gradient(90deg, #fff, #f0eeeb); border-bottom: 1px solid #b7b4b1; }
.hs .thumb { width: 171px; background: linear-gradient(#fff, #f0eeeb); border-right: 1px solid #b7b4b1; }
.mark { position: absolute; left: 221px; top: 217px; width: 54px; height: 51px; border: 6px solid #ec0000; }
.cursor { position: absolute; left: 241px; top: 227px; filter: drop-shadow(1px 1px 1px #0006); }
```
